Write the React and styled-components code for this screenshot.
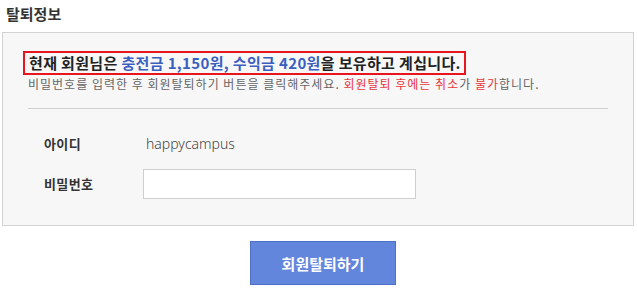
import React from 'react';
import styled, { createGlobalStyle } from 'styled-components';

const GlobalStyle = createGlobalStyle`
  body {
    margin: 0;
    background: #fff;
    font-family: "Noto Sans CJK KR", "Noto Sans", sans-serif;
    color: #333;
  }
`;

const Page = styled.div`
  width: 637px;
  padding-top: 4px;
`;

const Title = styled.h2`
  margin: 0 0 0 6px;
  font-size: 15px;
  line-height: 20px;
  font-weight: 700;
  color: #333;
`;

const Panel = styled.div`
  box-sizing: border-box;
  margin: 8px 0 0 2px;
  width: 632px;
  height: 194px;
  background: #f7f7f7;
  border: 1px solid #d2d2d2;
  padding: 17px 0 0;
`;

const Notice = styled.div`
  padding-left: 20px;
`;

const Highlight = styled.p`
  display: inline-block;
  margin: 0;
  padding: 0 3px 0 4px;
  border: 2px solid #e8141e;
  font-size: 15px;
  line-height: 20px;
  font-weight: 700;
  letter-spacing: 0.35px;
  color: #222;
  white-space: nowrap;
`;

const Blue = styled.span`
  color: #3b5fc0;
`;

const Guide = styled.p`
  margin: 1px 0 0 5px;
  font-size: 12px;
  line-height: 16px;
  letter-spacing: 1px;
  color: #666;
  white-space: nowrap;
`;

const Red = styled.span`
  color: #e8383d;
`;

const Divider = styled.hr`
  margin: 16px 25px 0;
  border: 0;
  border-top: 1px solid #d0d0d0;
`;

const Form = styled.div`
  display: grid;
  grid-template-columns: 99px 273px;
  row-gap: 10px;
  align-items: center;
  padding: 20px 0 0 41px;
`;

const Label = styled.span`
  font-size: 13px;
  font-weight: 700;
  letter-spacing: 0.4px;
  color: #333;
  line-height: 18px;
`;

const Value = styled.span`
  padding-left: 3px;
  font-size: 14px;
  color: #444;
  line-height: 30px;
  font-family: "Noto Sans", sans-serif;
  font-weight: 300;
`;

const Input = styled.input`
  box-sizing: border-box;
  width: 273px;
  height: 30px;
  border: 1px solid #cfcfcf;
  background: #fff;
  outline: none;
`;

const ButtonRow = styled.div`
  display: flex;
  justify-content: center;
  padding: 15px 0 0 9px;
`;

const Button = styled.button`
  box-sizing: border-box;
  width: 146px;
  height: 44px;
  background: #6386dd;
  border: 1px solid #4e6fc5;
  color: #fff;
  font-family: "Noto Sans CJK KR", sans-serif;
  font-size: 15px;
  font-weight: 700;
  cursor: pointer;
`;

export default function App() {
  return (
    <Page>
      <GlobalStyle />
      <Title>탈퇴정보</Title>
      <Panel>
        <Notice>
          <Highlight>
            현재 회원님은 <Blue>충전금 1,150원, 수익금 420원</Blue>을 보유하고 계십니다.
          </Highlight>
          <Guide>
            비밀번호를 입력한 후 회원탈퇴하기 버튼을 클릭해주세요. <Red>회원탈퇴 후에는 취소</Red>가 <Red>불가</Red>합니다.
          </Guide>
        </Notice>
        <Divider />
        <Form>
          <Label>아이디</Label>
          <Value>happycampus</Value>
          <Label>비밀번호</Label>
          <Input type="password" />
        </Form>
      </Panel>
      <ButtonRow>
        <Button>회원탈퇴하기</Button>
      </ButtonRow>
    </Page>
  );
}
